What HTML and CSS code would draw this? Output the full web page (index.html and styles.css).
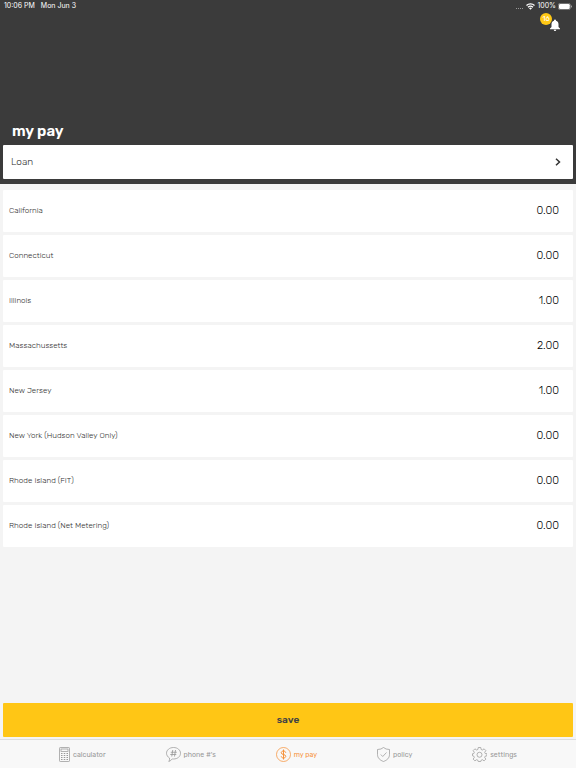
FILE: index.html
```
<!DOCTYPE html>
<html lang="en">
<head>
  <meta charset="UTF-8">
  <meta name="viewport" content="width=device-width, initial-scale=1">
  <title>my pay</title>
  <link rel="stylesheet" href="styles.css">
</head>
<body>
<header class="header">
  <div class="status">
    <span>10:06 PM</span>
    <span>Mon Jun 3</span>
    <div class="status-right">
      <span class="signal"><i></i><i></i><i></i><i></i></span>
      <svg width="9" height="7" viewBox="0 0 18 14" fill="none" stroke="#fff" stroke-width="2.6">
        <path d="M1 5a11.5 11.5 0 0 1 16 0M4 8.600a7.200 7.200 0 0 1 10 0"/>
        <path d="M9 13.500L6 10.500a4.300 4.300 0 0 1 6 0z" fill="#fff" stroke="none"/>
      </svg>
      <span>100%</span>
      <svg width="14" height="7" viewBox="0 0 28 14">
        <rect x=".7" y=".7" width="24" height="12.600" rx="3.500" fill="none" stroke="#aaa" stroke-width="1.200"/>
        <rect x="2" y="2" width="21.500" height="10" rx="2.500" fill="#fff"/>
        <path d="M26 4.500q2 1 2 2.500t-2 2.500z" fill="#aaa"/>
      </svg>
    </div>
  </div>

  <button class="bell" aria-label="Notifications">
    <svg width="10" height="12" viewBox="0 0 20 24" fill="#fff">
      <path d="M10 1a2 2 0 0 1 2 2v.6c3.300.9 5 3.700 5 7.200v5.200l3 3v1.500H0V19l3-3v-5.200c0-3.500 1.700-6.300 5-7.200V3a2 2 0 0 1 2-2zM7.500 21.500h5a2.500 2.500 0 0 1-5 0z"/>
    </svg>
    <span class="badge">16</span>
  </button>

  <h1>my pay</h1>
  <button class="picker">
    <span>Loan</span>
    <svg width="6" height="8" viewBox="0 0 6 8" fill="none" stroke="#333" stroke-width="1.500">
      <path d="M1 .7L4.500 4 1 7.300"/>
    </svg>
  </button>
</header>

<main class="rates">
  <div class="row"><label for="ca">California</label><input id="ca" type="text" value="0.00"></div>
  <div class="row"><label for="ct">Connecticut</label><input id="ct" type="text" value="0.00"></div>
  <div class="row"><label for="il">Illinois</label><input id="il" type="text" value="1.00"></div>
  <div class="row"><label for="ma">Massachussetts</label><input id="ma" type="text" value="2.00"></div>
  <div class="row"><label for="nj">New Jersey</label><input id="nj" type="text" value="1.00"></div>
  <div class="row"><label for="ny">New York (Hudson Valley Only)</label><input id="ny" type="text" value="0.00"></div>
  <div class="row"><label for="rif">Rhode Island (FIT)</label><input id="rif" type="text" value="0.00"></div>
  <div class="row"><label for="rin">Rhode Island (Net Metering)</label><input id="rin" type="text" value="0.00"></div>
</main>

<button class="save">save</button>

<nav class="tabs">
  <a href="#calculator">
    <svg width="11" height="15" viewBox="0 0 22 30">
      <rect x="1" y="1" width="20" height="28" rx="1.500"/>
      <rect x="4" y="4" width="14" height="5"/>
      <path d="M4 13h3M9.500 13h3M15 13h3M4 17h3M9.500 17h3M15 17h3M4 21h3M9.500 21h3M15 21h3M4 25h3M9.500 25h3M15 25h3" stroke-width="2.200"/>
    </svg>
    calculator
  </a>
  <a href="#phones">
    <svg width="15" height="15" viewBox="0 0 30 30">
      <path d="M7 22C3.500 20 1 16.500 1 12.500 1 6 7 1 15 1s14 5 14 11.500S23 24 15 24q-1.500 0-2.500-.2Q10 27.500 5.500 29 8 26 7 22z"/>
      <path d="M13.500 6l-2 13M19 6l-2 13M9.500 10.500h12M8.500 15h12" stroke-width="1.700"/>
    </svg>
    phone #'s
  </a>
  <a class="active" href="#pay">
    <svg width="15" height="15" viewBox="0 0 30 30">
      <circle cx="15" cy="15" r="14"/>
      <path d="M19.500 11.500c-.3-2.300-2-3.500-4.500-3.500s-4.500 1.300-4.500 3.500c0 4.800 9 2.400 9 7 0 2.200-2 3.500-4.500 3.500s-4.500-1.300-4.500-3.500M15 5v20" stroke-width="2"/>
    </svg>
    my pay
  </a>
  <a href="#policy">
    <svg width="13" height="15" viewBox="0 0 26 30">
      <path d="M13 1q4.500 4 12 4v10c0 7-5 11.500-12 14C6 26.500 1 22 1 15V5q7.500 0 12-4z"/>
      <path d="M7.500 15l4 4 7.500-8"/>
    </svg>
    policy
  </a>
  <a href="#settings">
    <svg width="15" height="15" viewBox="0 0 30 30">
      <path d="M12.500 1h5l.8 4 2.500 1 3.400-2.300 3.500 3.500L25.400 10.600l1 2.500 3.600.4v4l-3.600.8-1 2.500 2.300 3.400-3.500 3.500-3.400-2.300-2.500 1-.8 2.600h-5l-.8-2.600-2.500-1-3.400 2.300-3.500-3.500 2.300-3.400-1-2.500L1 17.500v-4l2.600-.4 1-2.500L2.300 7.200l3.500-3.500L9.200 6l2.500-1z"/>
      <circle cx="15" cy="15.500" r="5"/>
    </svg>
    settings
  </a>
</nav>
</body>
</html>
```
FILE: styles.css
```
* {
  box-sizing: border-box;
}
body {
  margin: 0;
  min-height: 100vh;
  display: flex;
  flex-direction: column;
  background: #f4f4f4;
  color: #333;
  font-family: Rubik, Roboto, sans-serif;
}
button, input {
  font-family: inherit;
  border: 0;
  padding: 0;
}
.header {
  display: flex;
  flex-direction: column;
  padding: 0 3px 5px;
  background: #3b3b3b;
}
.status {
  display: flex;
  align-items: center;
  gap: 6px;
  height: 12px;
  padding: 0 1px;
  color: #fff;
  font: 7px/12px Inter, sans-serif;
}
.status-right {
  display: flex;
  align-items: center;
  gap: 2px;
  margin-left: auto;
}
.signal {
  display: flex;
  gap: 1px;
  padding: 4px 1px 0 0;
}
.signal i {
  width: 1px;
  height: 1px;
  background: #999;
}
.bell {
  position: relative;
  align-self: flex-end;
  display: flex;
  margin: 7px 13px 0 0;
  background: none;
}
.badge {
  position: absolute;
  right: 8px;
  bottom: 6px;
  width: 12px;
  height: 12px;
  border-radius: 50%;
  background: #ffc815;
  color: #fff;
  font-size: 7px;
  line-height: 12px;
  text-align: center;
}
h1 {
  margin: 91px 9px 5px;
  color: #fff;
  font-size: 15px;
  line-height: 18px;
  font-weight: 600;
}
.picker {
  display: flex;
  align-items: center;
  justify-content: space-between;
  height: 34px;
  padding: 0 12px 0 8px;
  border-radius: 1px;
  background: #fff;
  color: #333;
  font-size: 10px;
  font-weight: 300;
}
.rates {
  flex: 1;
  display: flex;
  flex-direction: column;
  gap: 3px;
  padding: 6px 3px;
}
.row {
  display: flex;
  align-items: center;
  height: 42px;
  padding: 0 14px 1px 6px;
  border-radius: 1px;
  background: #fff;
}
.row label {
  flex: 1;
  font-size: 8px;
  font-weight: 300;
}
.row input {
  width: 60px;
  background: none;
  color: #000;
  font-size: 11px;
  font-weight: 300;
  text-align: right;
}
.save {
  height: 34px;
  margin: 0 3px 2px;
  border-radius: 1px;
  background: #ffc615;
  color: #444;
  font-size: 10px;
  font-weight: 600;
}
.tabs {
  display: flex;
  justify-content: center;
  gap: 60px;
  height: 29px;
  border-top: 1px solid #ddd;
  background: #f8f8f8;
}
.tabs a {
  display: flex;
  align-items: center;
  gap: 3px;
  color: #999;
  font-size: 7px;
  text-decoration: none;
  white-space: nowrap;
}
.tabs svg {
  fill: none;
  stroke: currentColor;
  stroke-width: 1.5;
}
.tabs .active {
  color: #f7933c;
}
```
